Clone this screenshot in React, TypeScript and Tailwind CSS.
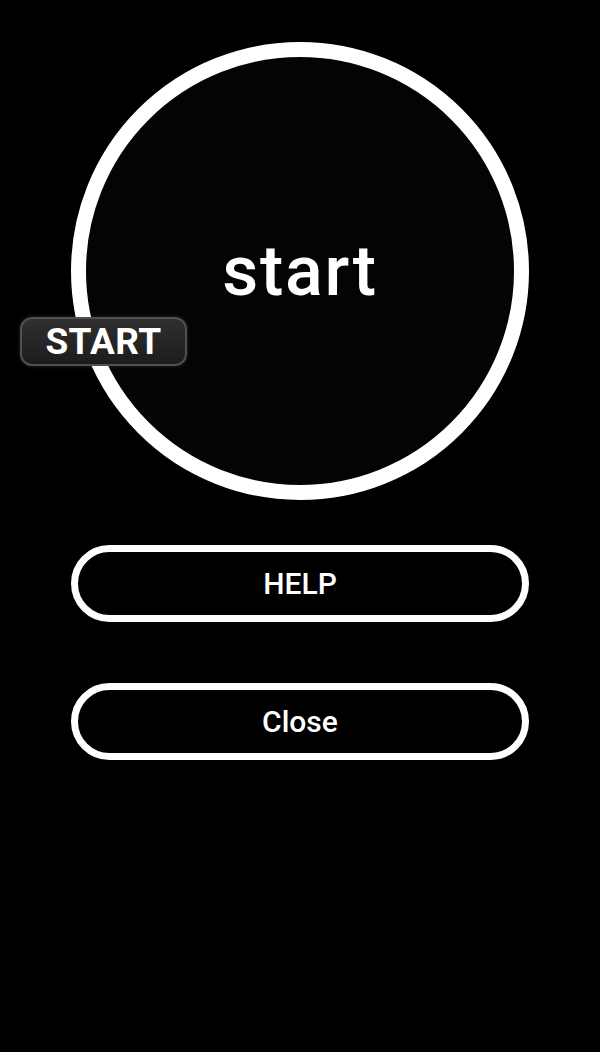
export default function App() {
  return (
    <div
      className="flex min-h-[1052px] w-full flex-col items-center bg-black pt-[42px]"
      style={{ fontFamily: "Roboto, 'Liberation Sans', sans-serif" }}
    >
      <div className="relative w-[458px]">
        <button className="flex h-[458px] w-[458px] items-center justify-center rounded-full border-[15px] border-white bg-[#040306]">
          <span className="text-[70px] font-medium leading-none tracking-[0.025em] text-white">start</span>
        </button>
        <div className="absolute left-[-51px] top-[275px] flex h-[49px] w-[167px] items-center justify-center rounded-[12px] border-2 border-[#505050] bg-gradient-to-b from-[#303030] to-[#1c1c1c] shadow-[0_0_4px_rgba(255,255,255,0.15)]">
          <span className="pb-[1px] text-[37px] font-bold leading-none tracking-[0.01em] text-white">START</span>
        </div>
      </div>

      <div className="mt-[45px] flex w-[458px] flex-col gap-[61px]">
        <button className="h-[77px] w-full rounded-full border-[7px] border-white bg-black text-[30px] font-medium text-white">
          HELP
        </button>
        <button className="h-[77px] w-full rounded-full border-[7px] border-white bg-black text-[30px] font-medium text-white">
          Close
        </button>
      </div>
    </div>
  );
}
